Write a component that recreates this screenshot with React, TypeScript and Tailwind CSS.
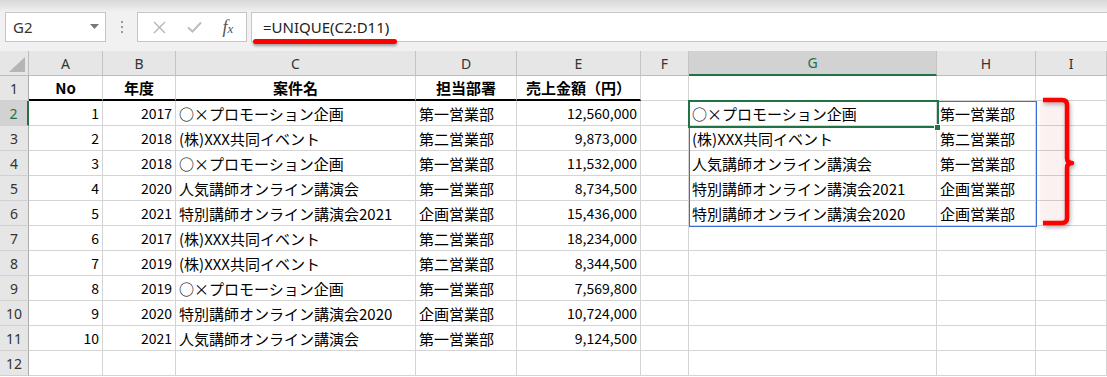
import clsx from "clsx";

const COLS = ["A", "B", "C", "D", "E", "F", "G", "H", "I"];

// alignment per column for data rows
const ALIGN: Record<string, string> = {
  A: "justify-end text-[14px]",
  B: "justify-end text-[14px]",
  C: "justify-start",
  D: "justify-start",
  E: "justify-end text-[14px]",
  F: "justify-start",
  G: "justify-start",
  H: "justify-start",
  I: "justify-start",
};

const HEAD = ["No", "年度", "案件名", "担当部署", "売上金額（円）"];

const DATA: string[][] = [
  ["1", "2017", "○×プロモーション企画", "第一営業部", "12,560,000"],
  ["2", "2018", "(株)XXX共同イベント", "第二営業部", "9,873,000"],
  ["3", "2018", "○×プロモーション企画", "第一営業部", "11,532,000"],
  ["4", "2020", "人気講師オンライン講演会", "第一営業部", "8,734,500"],
  ["5", "2021", "特別講師オンライン講演会2021", "企画営業部", "15,436,000"],
  ["6", "2017", "(株)XXX共同イベント", "第二営業部", "18,234,000"],
  ["7", "2019", "(株)XXX共同イベント", "第二営業部", "8,344,500"],
  ["8", "2019", "○×プロモーション企画", "第一営業部", "7,569,800"],
  ["9", "2020", "特別講師オンライン講演会2020", "企画営業部", "10,724,000"],
  ["10", "2021", "人気講師オンライン講演会", "第一営業部", "9,124,500"],
];

// spilled result of =UNIQUE(C2:D11)
const SPILL: string[][] = [
  ["○×プロモーション企画", "第一営業部"],
  ["(株)XXX共同イベント", "第二営業部"],
  ["人気講師オンライン講演会", "第一営業部"],
  ["特別講師オンライン講演会2021", "企画営業部"],
  ["特別講師オンライン講演会2020", "企画営業部"],
];

function cellValue(row: number, col: string): string {
  const idx = COLS.indexOf(col);
  if (row === 1) return idx < 5 ? HEAD[idx] : "";
  if (idx < 5) return DATA[row - 2]?.[idx] ?? "";
  if (col === "G" || col === "H") {
    return SPILL[row - 2]?.[col === "G" ? 0 : 1] ?? "";
  }
  return "";
}

function FormulaBar() {
  return (
    <div className="h-[51px] bg-[#f1f1f1] flex flex-col">
      <div className="h-[12px] bg-linear-to-b from-[#d8d8d8] to-[#f1f1f1]" />
      <div className="h-[30px] flex items-stretch pl-[5px]">
        {/* name box */}
        <div className="w-[101px] bg-white border border-[#c6c6c6] flex items-center pl-[7px] pr-[6px] justify-between">
          <span className="text-[15px] text-[#333] font-['Noto_Sans',sans-serif]">G2</span>
          <svg width="9" height="6" viewBox="0 0 9 6">
            <path d="M0 0H9L4.5 5Z" fill="#777" />
          </svg>
        </div>
        {/* dots */}
        <div className="w-[31px] flex flex-col items-center justify-center gap-[3px]">
          <span className="w-[2px] h-[2px] bg-[#9a9a9a]" />
          <span className="w-[2px] h-[2px] bg-[#9a9a9a]" />
          <span className="w-[2px] h-[2px] bg-[#9a9a9a]" />
        </div>
        {/* cancel / enter / fx */}
        <div className="w-[110px] bg-white border border-[#c6c6c6] flex items-center">
          <div className="w-[38px] flex justify-center pl-[4px]">
            <svg width="13" height="13" viewBox="0 0 13 13">
              <path d="M1 1L12 12M12 1L1 12" stroke="#b3b3b3" strokeWidth="1.3" />
            </svg>
          </div>
          <div className="w-[36px] flex justify-center">
            <svg width="15" height="12" viewBox="0 0 15 12">
              <path d="M1 6.5L5.5 10.5L14 1.5" stroke="#bdbdbd" strokeWidth="2" fill="none" />
            </svg>
          </div>
          <div className="flex-1 flex justify-center pr-[2px]">
            <span className="italic text-[18px] text-[#555] font-['Liberation_Serif',serif] leading-none">
              f<span className="text-[13px]">x</span>
            </span>
          </div>
        </div>
        {/* formula input */}
        <div className="flex-1 ml-[4px] bg-white border-y border-l border-[#c6c6c6] flex items-center pl-[11px]">
          <span className="text-[15px] text-[#222] font-['Noto_Sans',sans-serif]">=UNIQUE(C2:D11)</span>
        </div>
      </div>
    </div>
  );
}

function Sheet() {
  const rows = Array.from({ length: 12 }, (_, i) => i + 1);
  return (
    <div className="grid grid-cols-[29px_74px_73px_240px_101px_124px_48px_248px_99px_71px] font-['Noto_Sans_CJK_JP',sans-serif] text-[15px] text-black">
      {/* select-all corner */}
      <div className="h-[25px] bg-[#e6e6e6] border-r border-b border-[#bdbdbd] relative">
        <svg className="absolute left-0 top-0" width="29" height="25" viewBox="0 0 29 25">
          <path d="M25 6V21H9Z" fill="#b5b5b5" />
        </svg>
      </div>
      {COLS.map((c) => (
        <div
          key={c}
          className={clsx(
            "h-[25px] flex items-center justify-center border-r border-[#c4c4c4] text-[14px] font-['Noto_Sans',sans-serif]",
            c === "G"
              ? "bg-[#d2d2d2] border-b-2 border-b-[#217346] text-[#217346]"
              : "bg-[#e6e6e6] border-b border-b-[#bdbdbd] text-[#333]"
          )}
        >
          {c}
        </div>
      ))}

      {rows.map((r) => (
        <div key={r} className="contents">
          <div
            className={clsx(
              "h-[25px] flex items-center justify-center border-b border-[#d0d0d0] text-[14px] font-['Noto_Sans',sans-serif]",
              r === 2
                ? "bg-[#d2d2d2] border-r-2 border-r-[#217346] text-[#217346]"
                : "bg-[#e6e6e6] border-r border-r-[#ababab] text-[#333]"
            )}
          >
            {r}
          </div>
          {COLS.map((c, ci) => (
            <div
              key={c}
              className={clsx(
                "h-[25px] flex items-center px-[3px] border-r border-b border-[#d4d4d4] whitespace-nowrap overflow-hidden leading-none",
                r === 1 ? "justify-center font-bold" : ALIGN[c],
                r === 1 && ci < 5 && "border-b-2 border-b-black"
              )}
            >
              {cellValue(r, c)}
            </div>
          ))}
        </div>
      ))}
    </div>
  );
}

export default function App() {
  return (
    <div className="relative w-[1107px] h-[377px] overflow-hidden bg-white">
      <FormulaBar />
      <Sheet />

      {/* red underline under formula */}
      <div className="absolute left-[253px] top-[39px] w-[144px] h-[5px] rounded-full bg-[#ff0000] shadow-[0_2px_3px_rgba(0,0,0,0.35)]" />

      {/* spill range border */}
      <div className="absolute left-[689px] top-[101px] w-[348px] h-[126px] border border-[#3c6fd1]" />

      {/* active cell G2 */}
      <div className="absolute left-[688px] top-[100px] w-[251px] h-[28px] border-2 border-[#217346]" />
      <div className="absolute left-[934px] top-[124px] w-[7px] h-[7px] bg-[#217346] border border-white" />

      {/* red brace */}
      <svg className="absolute left-[1030px] top-[90px] drop-shadow-[1px_2px_2px_rgba(0,0,0,0.35)]" width="60" height="145" viewBox="0 0 60 145">
        <rect x="10" y="11" width="24" height="122" fill="rgba(255,0,0,0.045)" />
        <path
          d="M13 10H32Q37 10 37 15V68Q37 73 42 73Q37 73 37 78V128Q37 133 32 133H13"
          stroke="#ff0000"
          strokeWidth="4.5"
          fill="none"
          strokeLinejoin="round"
        />
      </svg>
    </div>
  );
}
